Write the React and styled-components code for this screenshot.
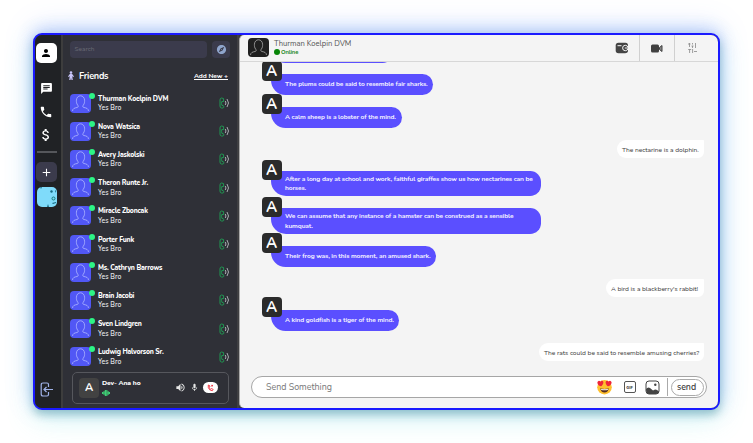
import React from "react";
import styled, { createGlobalStyle } from "styled-components";
import { MdChat, MdPerson, MdPhone, MdAttachMoney, MdExplore, MdAdd, MdVolumeUp, MdMic } from "react-icons/md";

const GlobalStyle = createGlobalStyle`
  * { box-sizing: border-box; }
  html, body { margin: 0; background: #fff; overflow: hidden; }
  body { font-family: Nunito, "Open Sans", sans-serif; }
  button, input { font: inherit; border: 0; padding: 0; margin: 0; }
`;

const Page = styled.main`
  width: 753px;
  height: 443px;
  padding: 33px 0 0 33px;
  overflow: hidden;
`;

const Window = styled.div`
  display: grid;
  grid-template-columns: 26px 2px 174px 2px 1fr;
  width: 687px;
  height: 377px;
  border: 2px solid #1a1aff;
  border-radius: 9px;
  background: #35363c;
  box-shadow:
    0 5px 9px rgba(40, 125, 125, 0.34),
    0 -3px 16px rgba(65, 115, 240, 0.3),
    0 10px 28px rgba(90, 235, 220, 0.22),
    0 -6px 30px rgba(90, 130, 255, 0.18);
  overflow: hidden;
`;

const Rail = styled.nav`
  display: flex;
  flex-direction: column;
  align-items: center;
  background: #202225;
  color: #fff;
  padding-top: 8px;
`;

const RailTile = styled.button`
  display: flex;
  align-items: center;
  justify-content: center;
  flex: none;
  width: 21px;
  height: 20px;
  margin-right: ${(p) => p.$offset ?? 4}px;
  border-radius: 5px;
  background: ${(p) => p.$bg || "#fff"};
  color: ${(p) => p.$color || "#000"};
  svg { display: block; }
`;

const RailLink = styled.a`
  display: flex;
  align-items: center;
  justify-content: center;
  flex: none;
  height: 23px;
  margin-right: 4px;
`;

const RailLinks = styled.div`
  padding-top: 14px;
  height: 88px;
`;

const RailRule = styled.div`
  width: 20px;
  height: 2px;
  margin: 0 3px 9px 0;
  background: #55575b;
  flex: none;
`;

const ServerImage = styled.div`
  width: 20px;
  height: 20px;
  margin: 5px 3px 0 0;
  border-radius: 5px;
  overflow: hidden;
  flex: none;
  svg { display: block; }
`;

const Logout = styled.a`
  margin: auto 0 11px -3px;
  height: 15px;
  svg { display: block; }
`;

const Divider = styled.div`
  background: ${(p) => p.$color};
`;

const Sidebar = styled.aside`
  display: flex;
  flex-direction: column;
  background: #2f3037;
  color: #fff;
  padding: 6px 7px 0 7px;
  min-width: 0;
`;

const SearchRow = styled.div`
  display: flex;
  flex: none;
  gap: 5px;
  height: 17px;
`;

const Search = styled.div`
  width: 137px;
  border-radius: 4px;
  background: #3b3b4c;
  color: #6a6b75;
  font-size: 6.5px;
  line-height: 16px;
  padding-left: 4.5px;
`;

const Explore = styled.button`
  display: flex;
  align-items: center;
  justify-content: center;
  width: 18px;
  border-radius: 4px;
  background: #3b3b4c;
  color: #8fa5cc;
`;

const FriendsHeader = styled.div`
  display: flex;
  flex: none;
  align-items: center;
  height: 31px;
  padding: 4px 2px 0 0;
  margin-left: -3px;
`;

const FriendsTitle = styled.h2`
  margin: 0 auto 0 4px;
  font-size: 9.1px;
  font-weight: 700;
  letter-spacing: -0.25px;
`;

const AddNew = styled.a`
  font-size: 6.7px;
  font-weight: 700;
  text-decoration: underline;
  letter-spacing: -0.1px;
`;

const Friend = styled.div`
  display: flex;
  flex: none;
  align-items: center;
  height: 28.2px;
`;

const Avatar = styled.div`
  position: relative;
  width: 21px;
  height: 19px;
  margin-top: ${(p) => p.$shift || 0}px;
  border-radius: 4px;
  background: ${(p) => p.$bg || "#5157f5"};
  flex: none;
  svg { display: block; width: 100%; height: 100%; }
`;

const Presence = styled.i`
  position: absolute;
  right: -3.5px;
  top: -1px;
  width: 6px;
  height: 6px;
  border-radius: 50%;
  background: #2df585;
`;

const FriendText = styled.div`
  margin: 0 auto 0 7px;
  font-size: 6.8px;
  line-height: 9.5px;
  white-space: nowrap;
`;

const FriendName = styled.div`
  font-weight: 800;
  letter-spacing: -0.19px;
`;

const Note = styled.div`
  font-weight: 600;
  letter-spacing: 0;
  color: #e4e4e8;
`;

const CallIcon = styled.svg`
  display: block;
  width: 11px;
  height: 12px;
`;

const CallCard = styled.div`
  display: flex;
  flex: none;
  align-items: center;
  width: 157px;
  height: 32px;
  margin: 1px 0 0 2px;
  padding: 0 10px 0 6px;
  border: 1px solid #56575d;
  border-radius: 5px;
`;

const Letter = styled.div`
  display: flex;
  align-items: center;
  justify-content: center;
  width: 20px;
  height: 20px;
  border-radius: 4px;
  background: ${(p) => p.$bg || "#2b2b2b"};
  color: #fff;
  font: 700 ${(p) => p.$font || 15}px Nunito, Lato, sans-serif;
  flex: none;
`;

const CallInfo = styled.div`
  height: 20px;
  margin: 0 auto 0 3px;
  font-size: 6.7px;
  line-height: 10px;
  font-weight: 800;
  letter-spacing: -0.1px;
  white-space: nowrap;
  svg { display: block; margin-top: 1px; }
`;

const CallControls = styled.div`
  display: flex;
  align-items: center;
  gap: 4px;
  color: #e5e5e5;
`;

const HangUp = styled.button`
  display: flex;
  align-items: center;
  justify-content: center;
  width: 15px;
  height: 11px;
  border-radius: 6px;
  background: #fff;
`;

const Chat = styled.section`
  display: grid;
  grid-template-rows: 27px 1fr 39px;
  min-width: 0;
  min-height: 0;
  background: #f4f4f4;
  border-left: 1px solid #aaa;
  border-radius: 5px 0 0 5px;
`;

const ChatHeader = styled.header`
  display: flex;
  align-items: center;
  border-bottom: 1px solid #d7d7d7;
  padding: 0 9px 0 8px;
`;

const Contact = styled.div`
  margin: -1px auto 0 5px;
  font-size: 7.6px;
  line-height: 9px;
  color: #555;
  letter-spacing: -0.02px;
`;

const Online = styled.div`
  display: flex;
  align-items: center;
  gap: 1px;
  color: #168516;
  font-size: 5.8px;
  font-weight: 700;
  letter-spacing: -0.1px;
  &::before {
    content: "";
    width: 6px;
    height: 6px;
    border-radius: 50%;
    background: #078507;
  }
`;

const HeaderAction = styled.button`
  display: flex;
  align-items: center;
  justify-content: center;
  width: 35px;
  height: 26px;
  background: none;
  border-left: ${(p) => (p.$plain ? "0" : "1px solid #d0d0d0")};
  color: #444;
`;

const Messages = styled.div`
  overflow: hidden;
  display: flex;
  flex-direction: column;
  align-items: flex-start;
  padding: 0 14px 0 30.5px;
`;

const Incoming = styled.div`
  position: relative;
  display: flex;
  align-items: center;
  flex: none;
  width: ${(p) => p.$w}px;
  height: ${(p) => p.$h || 21.5}px;
  margin-top: ${(p) => p.$mt || 0}px;
  padding: 0 0 1px 14.5px;
  border-radius: 4px 10.75px 10.75px 15px;
  background: #5b4fff;
  color: #f3f1ff;
  font-size: 6.6px;
  line-height: 9.5px;
  font-weight: 700;
  letter-spacing: -0.115px;
  white-space: pre;
`;

const SenderBadge = styled.div`
  position: absolute;
  left: -9px;
  top: ${(p) => p.$top || -12.5}px;
`;

const Outgoing = styled.div`
  display: flex;
  align-items: center;
  align-self: flex-end;
  flex: none;
  width: ${(p) => p.$w}px;
  height: 18px;
  margin-top: ${(p) => p.$mt}px;
  padding-left: 5px;
  border-radius: 9px 1px 6px 9px;
  background: #fff;
  color: #3c3c3c;
  font-size: 6.65px;
  letter-spacing: -0.045px;
  white-space: nowrap;
`;

const Composer = styled.div`
  display: flex;
  align-items: center;
  width: 456px;
  height: 22px;
  margin: 7px 0 0 11px;
  padding: 0 2px 0 14px;
  border: 1px solid #a6a6a6;
  border-radius: 11px;
  background: #fff;
`;

const Placeholder = styled.span`
  margin-right: auto;
  padding-bottom: 1px;
  color: #777;
  font-size: 8.9px;
`;

const Tools = styled.div`
  display: flex;
  align-items: center;
  margin-right: 7px;
  svg { display: block; }
`;

const Gif = styled.span`
  display: flex;
  align-items: center;
  justify-content: center;
  width: 12px;
  height: 12px;
  margin: 0 9.5px 0 10.5px;
  border: 1px solid #555;
  border-radius: 2px;
  color: #333;
  font-size: 4px;
  font-weight: 800;
`;

const Send = styled.div`
  display: flex;
  align-items: center;
  height: 18px;
  padding-left: 3px;
  border-left: 1px solid #aaa;
`;

const SendButton = styled.button`
  width: 33px;
  height: 17px;
  padding-right: 2px;
  border: 1px solid #aaa;
  border-radius: 9px;
  background: #fff;
  color: #3c3c3c;
  font-size: 8.8px;
  font-weight: 600;
  line-height: 14px;
`;

const friends = [
  "Thurman Koelpin DVM",
  "Nova Watsica",
  "Avery Jaskolski",
  "Theron Runte Jr.",
  "Miracle Zboncak",
  "Porter Funk",
  "Ms. Cathryn Barrows",
  "Brain Jacobi",
  "Sven Lindgren",
  "Ludwig Halvorson Sr.",
];

const messages = [
  { text: "The plums could be said to resemble fair sharks.", w: 162.5, mt: 10.8 },
  { text: "A calm sheep is a lobster of the mind.", w: 131.5, mt: 11.7 },
  { out: true, text: "The nectarine is a dolphin.", w: 87, mt: 12 },
  { text: "After a long day at school and work, faithful giraffes show us how nectarines can be\nhorses.", w: 270.5, h: 25.5, mt: 12.5, top: -11 },
  { text: "We can assume that any instance of a hamster can be construed as a sensible\nkumquat.", w: 270.5, h: 25.5, mt: 12, top: -11 },
  { text: "Their frog was, in this moment, an amused shark.", w: 165.5, mt: 12 },
  { out: true, text: "A bird is a blackberry's rabbit!", w: 98, mt: 12 },
  { text: "A kind goldfish is a tiger of the mind.", w: 128.5, mt: 12.5 },
  { out: true, text: "The rats could be said to resemble amusing cherries?", w: 165, mt: 12 },
];

const Silhouette = ({ color = "#b0b7ff" }) => (
  <svg viewBox="0 0 21 19" fill="none" stroke={color} strokeWidth=".8">
    <path d="M2.500 17c.2-2.500 2-3 4.500-3.500 1.500-.3 1.500-1.500.7-2.300C6.500 9.500 6.300 8 6.400 6.200 6.600 3.500 8.300 1.800 10.500 1.800s3.900 1.700 4.100 4.400c.1 1.800-.1 3.300-1.300 5-.8.800-.8 2 .7 2.300 2.500.5 4.300 1 4.500 3.500" />
  </svg>
);

const FriendCall = () => (
  <CallIcon viewBox="0 0 11 12" fill="none">
    <path d="M4.500 1.500 2.500 1Q1 1 1 3v6q0 2 1.500 2H4q1 0 .8-1.800Q4.300 8.200 3 8.500 2.200 6.500 2.800 4.500H4.700Z" stroke="#219653" strokeWidth="1" />
    <path d="M6.300 4q1.300 2 0 4M8 2q3 4 0 8" stroke="#b5b9bd" strokeWidth=".9" />
  </CallIcon>
);

const Personage = () => (
  <svg width="8" height="9" viewBox="0 0 8 9" fill="#c9c6fa">
    <circle cx="4" cy="1.500" r="1.300" />
    <path d="M3 2.800h2l2 2.700-.8.600L5.200 5l.6 4H4.500L4 6.700 3.500 9H2.200l.6-4-1 1.100-.8-.6Z" />
  </svg>
);

const Island = () => (
  <svg width="20" height="20" viewBox="0 0 20 20">
    <rect width="20" height="20" fill="#7fdbfa" />
    <g fill="#176b82">
      <circle cx="14.500" cy="4.500" r="1.200" />
      <path d="M3 0h2l-1 2ZM19 3v3l-1-2ZM11 17l1 3h-2ZM15 16l4-1v1l-3 1Z" />
    </g>
    <circle cx="16.500" cy="11.500" r="1.500" fill="none" stroke="#147b78" />
  </svg>
);

const LogoutIcon = () => (
  <svg width="14" height="15" viewBox="0 0 14 15" fill="none" stroke="#9fb2e8" strokeWidth="1.200">
    <path d="M8.500 5V2.500Q8.500 1 7 1H3Q1.200 1 1.200 3v9q0 2 1.800 2h4q1.500 0 1.500-1.500V10M13 7.500H4M6.500 5 4 7.500 6.500 10" />
  </svg>
);

const VoiceWave = () => (
  <svg width="8" height="8" viewBox="0 0 8 8" stroke="#3fcf76" strokeWidth="1.200">
    <path d="M.6 3v2M2 2.300v3.400M3.400 1v6M4.800 1v6M6.200 2.300v3.400M7.500 3v2" />
  </svg>
);

const WalletIcon = () => (
  <svg width="14" height="12" viewBox="0 0 14 12">
    <path d="M.7 3.500Q.7.700 3.500.7h7Q13 .7 13 3.500v5q0 2.800-3 2.800H3.500Q.7 11.300.7 8.500Z" fill="#444" />
    <path d="M2.500 3.700h4" stroke="#f4f4f4" />
    <circle cx="10.300" cy="6" r="2.700" fill="#444" stroke="#f4f4f4" />
    <path d="M9.800 6H12" stroke="#f4f4f4" />
  </svg>
);

const VideoIcon = () => (
  <svg width="12" height="9" viewBox="0 0 12 9">
    <rect y=".5" width="8" height="8" rx="1.500" fill="#404040" />
    <path d="m8.500 3.500 2.500-2v6l-2.500-2Z" stroke="#404040" fill="#888" />
  </svg>
);

const SlidersIcon = () => (
  <svg width="9" height="10" viewBox="0 0 9 10" stroke="#888" strokeWidth=".8">
    <path d="M1.500 0v4M0 1h2.500M4.500 0v1.500M4.500 3v2M3.500 3h2M7.500 0v5M.2 6.500h3M1.600 6.500V10M4.600 6v4M6 8.500h3" />
  </svg>
);

const HangUpIcon = () => (
  <svg width="7" height="8" viewBox="0 0 7 8" fill="none" stroke="#ee3c49" strokeWidth="1">
    <path d="M1.300 1v2.500Q2 6.400 5.300 6.700L6.200 5.500 4.500 4.500 3.500 5.300Q2.600 4.500 2.400 3.500L3 2 1.300 1M4.500 1.500h1.500M5 .8v2" />
  </svg>
);

const HeartEyes = () => (
  <svg width="17" height="16" viewBox="0 0 17 16">
    <circle cx="8.500" cy="8.200" r="7.300" fill="#ffc02e" />
    <path d="M5.200 7.300C1.200 6.300.5 2.600 2.500 1.900q1.200-.3 2 .8.900-1.300 2.200-.6C8.200 3.200 7 6 5.200 7.300ZM11.800 7.300c4-1 4.700-4.700 2.700-5.400q-1.200-.3-2 .8-.9-1.300-2.200-.6C8.800 3.200 10 6 11.800 7.300Z" fill="#ee2438" />
    <path d="M4.300 9.300q4.200 1.500 8.400 0-.6 4.200-4.200 4.200T4.300 9.300Z" fill="#552d1d" />
    <path d="M5 9.800q3.500 1.100 7 0l-.3 1.100q-3.200.8-6.400 0Z" fill="#fff" />
  </svg>
);

const PictureIcon = () => (
  <svg width="15" height="15" viewBox="0 0 15 15">
    <rect x="1" y="1" width="13" height="13" rx="3" fill="#fff" stroke="#444" />
    <path d="M1 9q2-2.500 4-1l3 2.500 2-1q1.500-.4 4 2Q13.500 14 11 14H4q-3 0-3-5Z" fill="#444" />
    <circle cx="10.300" cy="4.700" r="1.200" fill="#444" />
  </svg>
);

export default function App() {
  return (
    <Page>
      <GlobalStyle />
      <Window>
        <Rail>
          <RailTile><MdPerson size={12} /></RailTile>
          <RailLinks>
            <RailLink><MdChat size={13} /></RailLink>
            <RailLink><MdPhone size={14} /></RailLink>
            <RailLink><MdAttachMoney size={16} /></RailLink>
          </RailLinks>
          <RailRule />
          <RailTile $bg="#3b3b4c" $color="#fff" $offset={3}><MdAdd size={13} /></RailTile>
          <ServerImage><Island /></ServerImage>
          <Logout><LogoutIcon /></Logout>
        </Rail>
        <Divider $color="#3d3d3d" />
        <Sidebar>
          <SearchRow>
            <Search>Search</Search>
            <Explore><MdExplore size={11} /></Explore>
          </SearchRow>
          <FriendsHeader>
            <Personage />
            <FriendsTitle>Friends</FriendsTitle>
            <AddNew>Add New +</AddNew>
          </FriendsHeader>
          {friends.map((name) => (
            <Friend key={name}>
              <Avatar><Silhouette /><Presence /></Avatar>
              <FriendText>
                <FriendName>{name}</FriendName>
                <Note>Yes Bro</Note>
              </FriendText>
              <FriendCall />
            </Friend>
          ))}
          <CallCard>
            <Letter $bg="#424242" $font={11}>A</Letter>
            <CallInfo>Dev- Ana ho<VoiceWave /></CallInfo>
            <CallControls>
              <MdVolumeUp size={11} />
              <MdMic size={9} />
              <HangUp><HangUpIcon /></HangUp>
            </CallControls>
          </CallCard>
        </Sidebar>
        <Divider $color="#3f3f42" />
        <Chat>
          <ChatHeader>
            <Avatar $bg="#202020" $shift={-2}><Silhouette color="#aaa" /></Avatar>
            <Contact>Thurman Koelpin DVM<Online>Online</Online></Contact>
            <HeaderAction $plain><WalletIcon /></HeaderAction>
            <HeaderAction><VideoIcon /></HeaderAction>
            <HeaderAction><SlidersIcon /></HeaderAction>
          </ChatHeader>
          <Messages>
            <Incoming $w={122} $mt={-20.5} />
            {messages.map((m) =>
              m.out ? (
                <Outgoing key={m.text} $w={m.w} $mt={m.mt}>{m.text}</Outgoing>
              ) : (
                <Incoming key={m.text} $w={m.w} $h={m.h} $mt={m.mt}>
                  <SenderBadge $top={m.top}><Letter>A</Letter></SenderBadge>
                  {m.text}
                </Incoming>
              )
            )}
          </Messages>
          <Composer>
            <Placeholder>Send Something</Placeholder>
            <Tools><HeartEyes /><Gif>GIF</Gif><PictureIcon /></Tools>
            <Send><SendButton>send</SendButton></Send>
          </Composer>
        </Chat>
      </Window>
    </Page>
  );
}
